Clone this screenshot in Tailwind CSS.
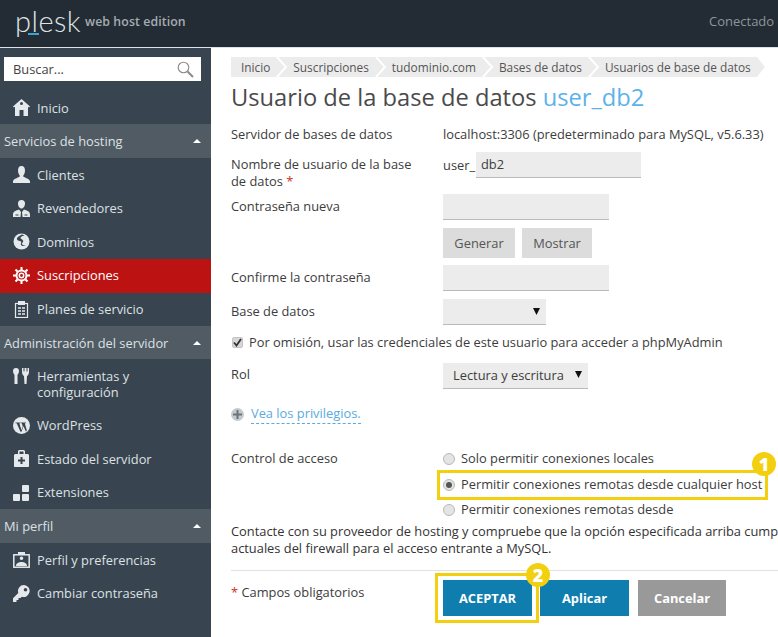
<!DOCTYPE html>
<html lang="es">
<head>
<meta charset="utf-8">
<title>Plesk</title>
<script src="https://cdn.jsdelivr.net/npm/@tailwindcss/browser@4"></script>
</head>
<body class="m-0 w-[778px] h-[637px] overflow-hidden bg-white font-['Open_Sans',sans-serif] text-[12.85px] leading-[17px] text-[#333]">
<div class="relative w-[778px] h-[637px] overflow-hidden flex flex-col">
  <header class="h-[47px] shrink-0 bg-[#232c34] flex items-center justify-between overflow-hidden">
    <div class="flex items-center pl-[15px]">
      <div class="relative h-[47px] w-[70px]">
        <span class="absolute left-0 top-[3px] font-['Lato',sans-serif] font-light text-[29px] leading-[36px] tracking-[0.5px] text-[#dfe3e5]">plesk</span>
        <span class="absolute left-[13px] top-[33px] w-[11px] h-[2px] bg-[#3aa3d0]"></span>
      </div>
      <span class="mb-[5px] text-[12.3px] font-semibold tracking-[0.1px] text-[#a6adb2] whitespace-nowrap">web host edition</span>
    </div>
    <span class="text-[13px] text-[#8d959b] whitespace-nowrap mb-[4px] w-[69px] overflow-hidden">Conectado como</span>
  </header>
  <div class="h-px shrink-0 bg-[#dfe2e4]"></div>
  <div class="flex flex-1 min-h-0">
    <aside class="w-[211px] shrink-0 bg-[#38444f] text-[#dde1e4] flex flex-col pt-[9px] leading-[16px]">
      <div class="ml-[4px] w-[197px] h-[24px] bg-white flex items-center justify-between pl-[9px] pr-[7px] text-[#444]">
        <span>Buscar...</span>
        <svg width="17" height="17" viewBox="0 0 17 17" fill="none" stroke="#8a8a8a"><circle cx="6.500" cy="6.500" r="5.300" stroke-width="1.100"/><path d="M10.500 10.500 16 16" stroke-width="2"/></svg>
      </div>
      <nav class="mt-[10px]">
        <a class="h-[33px] flex items-center gap-[7px] pl-[13px]"><svg class="w-[17px] h-[17px]" viewBox="0 0 17 17" fill="#e6e9eb"><path d="M8.500 0 0 7.500l1 1 1-.8V17h4.500v-6h4v6H15V7.700l1 .8 1-1zM8.500 3a1.500 1.500 0 1 1 0 3 1.500 1.500 0 0 1 0-3z"/></svg>Inicio</a>

        <div class="h-[34px] bg-[#505b64] flex items-center justify-between pl-[4px] pr-[10px]">Servicios de hosting<svg width="8" height="4" viewBox="0 0 8 4" fill="#fff"><path d="M4 0 8 4H0z"/></svg></div>
        <a class="h-[33.5px] flex items-center gap-[7px] pl-[13px]"><svg class="w-[17px] h-[17px]" viewBox="0 0 17 17" fill="#e6e9eb"><path d="M8.500 0C6 0 5 2 5 4.500 5 7 6 9 7 10c0 1.500-7 2.500-7 5.500V17h17v-1.500C17 12.500 10 11.500 10 10c1-1 2-3 2-5.500C12 2 11 0 8.500 0z"/></svg>Clientes</a>
        <a class="h-[33.5px] flex items-center gap-[7px] pl-[13px]"><svg class="w-[17px] h-[17px]" viewBox="0 0 17 17" fill="#e6e9eb"><path d="M8.500 0a3.500 3.500 0 0 0-3.500 3.500C5 6 6.500 8.500 8.500 8.500S12 6 12 3.500A3.500 3.500 0 0 0 8.500 0z"/><path d="M6 9.500C3 10.500 0 11.500 0 14.500V17h7.500l.5-5zM11 9.500C14 10.500 17 11.500 17 14.500V17H9.500L9 12z"/><path d="M2.500 14.500h3v1h-3zM11.500 14.500h3v1h-3z" fill="#38444f"/></svg>Revendedores</a>
        <a class="h-[33.5px] flex items-center gap-[7px] pl-[13px]"><svg class="w-[17px] h-[17px]" viewBox="0 0 17 17"><circle cx="8.500" cy="8.500" r="8" fill="#e6e9eb"/><path d="M9 1.500C6 3 3.500 4.500 4 6.500c.5 1.500 3 1 4 2s-1 2.500 0 3.500 3 1.500 4.500.5c-1.500 0-3-.5-3.500-1.500s2-2 1-3.500S7.500 6 7.500 5 9 3 11.500 2.500z" fill="#38444f"/></svg>Dominios</a>
        <a class="h-[34px] bg-[#bd1212] text-white flex items-center gap-[7px] pl-[13px] pb-[1px]"><svg class="w-[17px] h-[17px]" viewBox="0 0 17 17" fill="none" stroke="#fff"><circle cx="8.500" cy="8.500" r="2.200" stroke-width="1.500"/><circle cx="8.500" cy="8.500" r="5" stroke-width="2"/><path d="M8.500 0v3M8.500 14v3M0 8.500h3M14 8.500h3M2.500 2.500l2 2M12.500 12.500l2 2M14.500 2.500l-2 2M4.500 12.500l-2 2" stroke-width="2"/></svg>Suscripciones</a>
        <a class="h-[33.5px] flex items-center gap-[7px] pl-[13px]"><svg class="w-[17px] h-[17px]" viewBox="0 0 17 17" fill="none" stroke="#e6e9eb"><rect x="2.500" y="2.500" width="12" height="14" stroke-width="1.200"/><rect x="5.500" y="0.500" width="6" height="3" fill="#e6e9eb"/><path d="M5 7h7M5 10h7M5 13h7" stroke-width="1.500"/><path d="M8.500 6v8" stroke="#38444f"/></svg>Planes de servicio</a>

        <div class="h-[33px] bg-[#505b64] flex items-center justify-between pl-[4px] pr-[10px]">Administración del servidor<svg width="8" height="4" viewBox="0 0 8 4" fill="#fff"><path d="M4 0 8 4H0z"/></svg></div>
        <a class="h-[49.5px] flex gap-[7px] pl-[13px] pt-[9px]"><svg class="w-[17px] h-[17px] shrink-0" viewBox="0 0 17 17" fill="#e6e9eb"><path d="M0 3a3 3 0 0 1 6 0c0 2-1 3-1.500 4L4.500 16h-3L1.500 7C1 6 0 5 0 3z"/><path d="M9 0h1.500v3.500h1V0h2v3.500h1V0H16v4c0 2-1 3.500-2 4l-.5 8h-2L11 8C10 7.500 9 6 9 4z"/></svg><span>Herramientas y<br>configuración</span></a>
        <a class="h-[33.5px] flex items-center gap-[7px] pl-[13px]"><svg class="w-[17px] h-[17px]" viewBox="0 0 17 17"><circle cx="8.500" cy="8.500" r="8.500" fill="#e6e9eb"/><path d="M2.500 5.500h5v.8H6.300l2.200 7 1.300-3.700-1-3.300H8v-.8h5v.8h-1.200l2 7-.8 1.500-2.500-5.500-2 5.500H7.500L3.700 6.300H2.500z" fill="#38444f"/></svg>WordPress</a>
        <a class="h-[33.5px] flex items-center gap-[7px] pl-[13px]"><svg class="w-[17px] h-[17px]" viewBox="0 0 17 17" fill="#e6e9eb"><path d="M5 4V1.500C5 .7 5.700 0 6.500 0h4c.8 0 1.500.7 1.500 1.500V4h2.500c.8 0 1.500.7 1.500 1.500V16c0 .6-.4 1-1 1H2c-.6 0-1-.4-1-1V5.500C1 4.700 1.700 4 2.500 4zm1.500 0h4V1.500h-4z"/><path d="M7.500 7h2v2.500H12v2H9.500V14h-2v-2.500H5v-2h2.500z" fill="#38444f"/></svg>Estado del servidor</a>
        <a class="h-[33.5px] flex items-center gap-[7px] pl-[13px]"><svg class="w-[17px] h-[17px]" viewBox="0 0 17 17" fill="#e6e9eb"><rect x="0" y="10" width="7" height="7" rx="1"/><rect x="9" y="10" width="7" height="7" rx="1"/><rect x="9" y="1" width="7" height="7" rx="1"/></svg>Extensiones</a>

        <div class="h-[34px] bg-[#505b64] flex items-center justify-between pl-[4px] pr-[10px]">Mi perfil<svg width="8" height="4" viewBox="0 0 8 4" fill="#fff"><path d="M4 0 8 4H0z"/></svg></div>
        <a class="h-[33.5px] flex items-center gap-[7px] pl-[13px]"><svg class="w-[17px] h-[17px]" viewBox="0 0 17 17" fill="none" stroke="#e6e9eb"><rect x="0.800" y="3.800" width="15.400" height="12.400" stroke-width="1.500"/><rect x="5" y="1" width="7" height="3" fill="#e6e9eb" stroke="none"/><path d="M8.500 5.500a1.800 1.800 0 1 1 0 3.600 1.800 1.800 0 0 1 0-3.600zM3 15c0-3 3-4 5.500-4S14 12 14 15z" fill="#e6e9eb" stroke="none"/></svg>Perfil y preferencias</a>
        <a class="h-[33.5px] flex items-center gap-[7px] pl-[13px]"><svg class="w-[17px] h-[17px]" viewBox="0 0 17 17" fill="#e6e9eb"><path d="M11 0a6 6 0 0 0-5.700 7.900L0 13.200V17h3.500v-2H5.500v-2h2l1.300-1.300A6 6 0 1 0 11 0zm1.500 3a1.800 1.800 0 1 1 0 3.600 1.800 1.800 0 0 1 0-3.600z"/></svg>Cambiar contraseña</a>
      </nav>
    </aside>

    <main class="relative flex-1 min-w-0 overflow-hidden pl-[20px] pt-[9px] text-[#3c3c3c]">
      <div class="flex items-center w-[534px] h-[20px] bg-[#ececec] pl-[10px] text-[11.85px] text-[#555] whitespace-nowrap [clip-path:polygon(0_0,98.5%_0,100%_50%,98.5%_100%,0_100%)]">
        <span>Inicio</span>
        <svg class="mx-[5px] w-[13px] h-[20px]" viewBox="0 0 13 20" fill="none" stroke="#fff" stroke-width="2"><path d="M2 0l9 10-9 10"/></svg>
        <span>Suscripciones</span>
        <svg class="mx-[5px] w-[13px] h-[20px]" viewBox="0 0 13 20" fill="none" stroke="#fff" stroke-width="2"><path d="M2 0l9 10-9 10"/></svg>
        <span>tudominio.com</span>
        <svg class="mx-[5px] w-[13px] h-[20px]" viewBox="0 0 13 20" fill="none" stroke="#fff" stroke-width="2"><path d="M2 0l9 10-9 10"/></svg>
        <span>Bases de datos</span>
        <svg class="mx-[5px] w-[13px] h-[20px]" viewBox="0 0 13 20" fill="none" stroke="#fff" stroke-width="2"><path d="M2 0l9 10-9 10"/></svg>
        <span>Usuarios de base de datos</span>
      </div>
      <h1 class="mt-[3px] h-[34px] text-[23.7px] leading-[34px] font-normal text-[#4a4a4a] whitespace-nowrap">Usuario de la base de datos <span class="text-[#5cb2e8]">user_db2</span></h1>

      <div class="mt-[10px] flex items-center h-[20px]"><span class="w-[212px] shrink-0">Servidor de bases de datos</span><span class="whitespace-nowrap">localhost:3306 (predeterminado para MySQL, v5.6.33)</span></div>

      <div class="mt-[8px] flex h-[34px]">
        <span class="w-[212px] shrink-0 pt-[4px] pr-[20px]">Nombre de usuario de la base de datos <span class="text-[#c8352b]">*</span></span>
        <div class="flex h-[26px] items-center"><span class="w-[33px]">user_</span><div class="w-[165px] h-[26px] bg-[#ececec] border-b border-[#b4bcc2] pl-[5px] leading-[24px]">db2</div></div>
      </div>

      <div class="mt-[8px] flex h-[26px]"><span class="w-[212px] shrink-0 pt-[4px]">Contraseña nueva</span><div class="w-[166px] h-[26px] bg-[#ececec] border-b border-[#b4bcc2]"></div></div>

      <div class="mt-[8px] flex h-[30px] pl-[212px] gap-[7px]">
        <button class="w-[72px] h-[30px] bg-[#dcdcdc] text-[#555]">Generar</button>
        <button class="w-[70px] h-[30px] bg-[#dcdcdc] text-[#555]">Mostrar</button>
      </div>

      <div class="mt-[7px] flex h-[26px]"><span class="w-[212px] shrink-0 pt-[4px]">Confirme la contraseña</span><div class="w-[166px] h-[26px] bg-[#ececec] border-b border-[#b4bcc2]"></div></div>

      <div class="mt-[8px] flex h-[26px]"><span class="w-[212px] shrink-0 pt-[4px]">Base de datos</span><div class="w-[103px] h-[26px] bg-[#ececec] border-b border-[#b4bcc2] flex items-center justify-end pr-[6px]"><svg width="7" height="7" viewBox="0 0 7 7" fill="#111"><path d="M0 0h7L3.500 7z"/></svg></div></div>

      <div class="mt-[7px] flex items-center h-[20px] pl-[1px] gap-[6px] whitespace-nowrap">
        <span class="w-[11px] h-[11px] bg-[#d6d6d6] border border-[#c4c4c4] rounded-[2px] flex items-center justify-center"><svg width="9" height="9" viewBox="0 0 9 9" fill="none" stroke="#333" stroke-width="1.800"><path d="M1 4.500 3.500 7.500 8 1"/></svg></span>
        <span>Por omisión, usar las credenciales de este usuario para acceder a phpMyAdmin</span>
      </div>

      <div class="mt-[11px] flex h-[26px]"><span class="w-[212px] shrink-0 pt-[3px]">Rol</span><div class="w-[145px] h-[26px] bg-[#ececec] border-b border-[#b4bcc2] flex items-center justify-between pl-[10px] pr-[6px] whitespace-nowrap">Lectura y escritura<svg class="mb-[2px]" width="7" height="7" viewBox="0 0 7 7" fill="#111"><path d="M0 0h7L3.500 7z"/></svg></div></div>

      <div class="mt-[15px] flex items-center h-[20px] gap-[7px]">
        <span class="w-[13px] h-[13px] rounded-full bg-[#c4cacd] flex items-center justify-center"><svg width="9" height="9" viewBox="0 0 9 9" fill="#6d7377"><path d="M3.500 0h2v3.500H9v2H5.500V9h-2V5.500H0v-2h3.500z"/></svg></span>
        <span class="text-[#5aaae0] border-b border-dashed border-[#5aaae0] leading-[17px] pb-[1px]">Vea los privilegios.</span>
      </div>

      <div class="mt-[25px] flex">
        <span class="w-[212px] shrink-0 pt-[1px]">Control de acceso</span>
        <div class="flex flex-col">
          <label class="h-[19px] flex items-center gap-[6px] whitespace-nowrap"><span class="w-[12px] h-[12px] rounded-full bg-[#e4e4e4] border border-[#b8b8b8]"></span>Solo permitir conexiones locales</label>
          <label class="mt-[7px] h-[19px] flex items-center gap-[6px] whitespace-nowrap"><span class="w-[12px] h-[12px] rounded-full bg-[#e4e4e4] border border-[#b8b8b8] flex items-center justify-center"><span class="w-[6px] h-[6px] rounded-full bg-[#555]"></span></span>Permitir conexiones remotas desde cualquier host</label>
          <label class="mt-[6px] h-[19px] flex items-center gap-[6px] whitespace-nowrap"><span class="w-[12px] h-[12px] rounded-full bg-[#e4e4e4] border border-[#b8b8b8]"></span>Permitir conexiones remotas desde</label>
        </div>
      </div>

      <p class="mt-[4px] w-[560px] text-[#333] whitespace-nowrap">Contacte con su proveedor de hosting y compruebe que la opción especificada arriba cumple las reglas<br>actuales del firewall para el acceso entrante a MySQL.</p>

      <div class="mt-[13px] border-t border-[#e2e2e2] flex h-[46px] pt-[9px]">
        <span class="w-[212px] shrink-0 pt-[4px]"><span class="text-[#c8352b]">*</span> Campos obligatorios</span>
        <div class="flex gap-[8px] text-white">
          <button class="w-[89px] h-[36px] bg-[#0f7dae] font-bold">ACEPTAR</button>
          <button class="w-[89px] h-[36px] bg-[#0f7dae] font-bold">Aplicar</button>
          <button class="w-[88px] h-[36px] ml-[1px] bg-[#999999] font-bold">Cancelar</button>
        </div>
      </div>

      <!-- annotations -->
      <div class="absolute left-[226px] top-[422px] w-[331px] h-[30px] border-[3px] border-[#f3d00f]"></div>
      <div class="absolute left-[541px] top-[404px] w-[24px] h-[24px] rounded-full bg-[#f3d00f] text-white font-extrabold text-[18px] leading-[24px] text-center">1</div>
      <div class="absolute left-[224px] top-[525px] w-[104px] h-[50px] border-[3px] border-[#f3d00f]"></div>
      <div class="absolute left-[315px] top-[515px] w-[24px] h-[24px] rounded-full bg-[#f3d00f] text-white font-extrabold text-[18px] leading-[24px] text-center">2</div>
    </main>
  </div>
</div>
</body>
</html>
